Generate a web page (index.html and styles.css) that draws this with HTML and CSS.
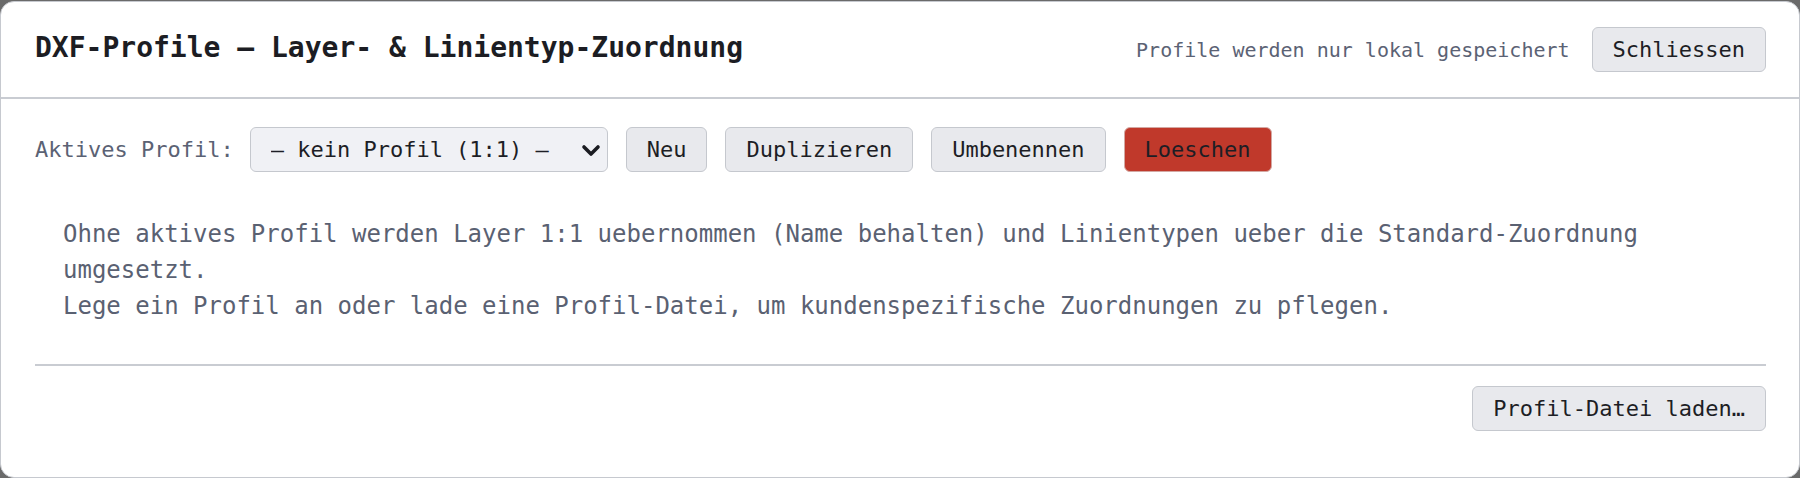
FILE: index.html
```html
<!DOCTYPE html>
<html lang="de">
<head>
<meta charset="utf-8">
<title>DXF-Profile</title>
<link rel="stylesheet" href="styles.css">
</head>
<body>
<div class="dialog">
  <header class="head">
    <h1 class="title">DXF-Profile — Layer- &amp; Linientyp-Zuordnung</h1>
    <div class="head-right">
      <span class="caption">Profile werden nur lokal gespeichert</span>
      <button class="btn">Schliessen</button>
    </div>
  </header>
  <main class="body">
    <div class="toolbar">
      <label class="label" for="prof">Aktives Profil:</label>
      <span class="select-wrap">
        <select id="prof" class="select">
          <option>— kein Profil (1:1) —</option>
        </select>
        <svg class="chev" width="20" height="13" viewBox="0 0 20 13"><polyline points="3,3 10,10 17,3" fill="none" stroke="#1b1c22" stroke-width="3.6" stroke-linecap="round" stroke-linejoin="round"/></svg>
      </span>
      <button class="btn">Neu</button>
      <button class="btn">Duplizieren</button>
      <button class="btn">Umbenennen</button>
      <button class="btn btn-danger">Loeschen</button>
    </div>
    <p class="empty">Ohne aktives Profil werden Layer 1:1 uebernommen (Name behalten) und Linientypen ueber die Standard-Zuordnung umgesetzt.<br>Lege ein Profil an oder lade eine Profil-Datei, um kundenspezifische Zuordnungen zu pflegen.</p>
    <footer class="foot">
      <button class="btn">Profil-Datei laden…</button>
    </footer>
  </main>
</div>
</body>
</html>
```
FILE: styles.css
```css
* { box-sizing: border-box; }
html, body { margin: 0; padding: 0; }
body {
  background: #6a6a6a;
  font-family: "DejaVu Sans Mono", "Liberation Mono", monospace;
  width: 1800px;
  height: 478px;
  overflow: hidden;
}
.dialog {
  width: 1800px;
  height: 477px;
  margin-top: 1px;
  background: #ffffff;
  border: 1px solid #c6c9cf;
  border-radius: 14px;
  overflow: hidden;
}
.head {
  height: 97px;
  padding: 0 33px 0 34px;
  border-bottom: 2px solid #c9ccd2;
  display: flex;
  align-items: center;
  justify-content: space-between;
}
.title {
  margin: 0;
  font-size: 28px;
  font-weight: bold;
  color: #1c1d23;
  line-height: 34px;
  margin-top: -3px;
}
.head-right {
  display: flex;
  align-items: center;
  gap: 22px;
}
.caption {
  font-size: 20px;
  color: #5b6274;
}
.btn {
  font-family: "DejaVu Sans Mono", "Liberation Mono", monospace;
  font-size: 22px;
  line-height: 27px;
  padding: 8px 20px;
  border: 1px solid #c5c8ce;
  border-radius: 6px;
  background: #e8e9ed;
  color: #1d1e25;
  margin: 0;
}
.btn-danger {
  background: #c0392b;
  border-color: #d3a8a3;
  color: #1d1e25;
}
.body {
  padding: 28px 33px 0 34px;
}
.toolbar {
  display: flex;
  align-items: center;
  gap: 18px;
}
.label {
  font-size: 22px;
  color: #5b6274;
  margin-right: -2px;
}
.select-wrap {
  position: relative;
  display: inline-block;
}
.select {
  appearance: none;
  -webkit-appearance: none;
  width: 358px;
  height: 45px;
  font-family: "DejaVu Sans Mono", "Liberation Mono", monospace;
  font-size: 22px;
  padding: 0 20px;
  border: 1px solid #c5c8ce;
  border-radius: 6px;
  background: #f0f1f5;
  color: #1d1e25;
  margin: 0;
  display: block;
}
.chev {
  position: absolute;
  right: 7px;
  top: 17px;
  pointer-events: none;
}
.empty {
  margin: 24px 0 0;
  padding: 20px 28px;
  font-size: 24px;
  line-height: 36px;
  color: #5a6172;
}
.foot {
  margin-top: 20px;
  border-top: 2px solid #c9ccd2;
  padding-top: 20px;
  display: flex;
  justify-content: flex-end;
}
```
